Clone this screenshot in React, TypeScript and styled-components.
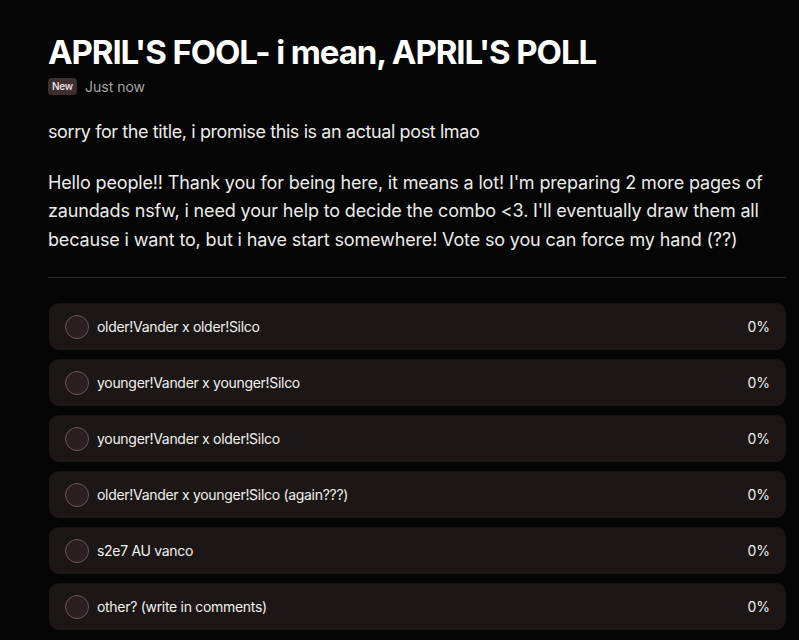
import styled, { createGlobalStyle } from "styled-components";

const Global = createGlobalStyle`
  body {
    margin: 0;
    background: #050505;
    color: #ecebea;
    font-family: Inter, "Noto Sans", sans-serif;
  }
`;

const Page = styled.main`
  padding: 30px 13px 0 48px;
  display: flex;
  flex-direction: column;
`;

const Title = styled.h1`
  margin: 0;
  font-size: 33px;
  line-height: 44px;
  font-weight: 700;
  letter-spacing: -1.1px;
  color: #ffffff;
`;

const Meta = styled.div`
  display: flex;
  align-items: center;
  gap: 8px;
  margin-top: 4px;
`;

const Badge = styled.span`
  background: #3d2f2f;
  color: #f3eeee;
  font-size: 10px;
  font-weight: 500;
  padding: 3px 4px;
  border-radius: 4px;
  line-height: 11px;
  letter-spacing: -0.2px;
`;

const Time = styled.span`
  font-size: 14px;
  color: #a9a6a4;
`;

const Text = styled.p`
  margin: 0;
  font-size: 18px;
  line-height: 28.5px;
  color: #ecebea;
  letter-spacing: -0.15px;
`;

const Lead = styled(Text)`
  margin-top: 23px;
  letter-spacing: -0.4px;
`;

const Body = styled(Text)`
  margin-top: 22px;
`;

const Divider = styled.hr`
  border: 0;
  border-top: 1px solid #2e2e2e;
  margin: 23px 0 25px;
`;

const Poll = styled.div`
  display: flex;
  flex-direction: column;
  gap: 9px;
  padding-left: 1px;
`;

const Option = styled.label`
  display: flex;
  align-items: center;
  height: 47px;
  padding: 0 16px;
  background: #1c1716;
  border-radius: 10px;
  font-size: 14px;
  letter-spacing: -0.3px;
  color: #f2f0ef;
`;

const Radio = styled.span`
  box-sizing: border-box;
  width: 24px;
  height: 24px;
  border-radius: 50%;
  border: 1px solid #6b5a57;
  background: #2a1f1e;
  flex-shrink: 0;
  margin-right: 8px;
`;

const Label = styled.span`
  flex: 1;
`;

const Percent = styled.span`
  font-size: 14px;
  letter-spacing: 0;
`;

const options = [
  "older!Vander x older!Silco",
  "younger!Vander x younger!Silco",
  "younger!Vander x older!Silco",
  "older!Vander x younger!Silco (again???)",
  "s2e7 AU vanco",
  "other? (write in comments)",
];

export default function App() {
  return (
    <>
      <Global />
      <Page>
        <Title>APRIL'S FOOL- i mean, APRIL'S POLL</Title>
        <Meta>
          <Badge>New</Badge>
          <Time>Just now</Time>
        </Meta>
        <Lead>sorry for the title, i promise this is an actual post lmao</Lead>
        <Body>
          Hello people!! Thank you for being here, it means a lot! I'm preparing 2 more pages of
          zaundads nsfw, i need your help to decide the combo &lt;3. I'll eventually draw them all
          because i want to, but i have start somewhere! Vote so you can force my hand (??)
        </Body>
        <Divider />
        <Poll>
          {options.map((o) => (
            <Option key={o}>
              <Radio />
              <Label>{o}</Label>
              <Percent>0%</Percent>
            </Option>
          ))}
        </Poll>
      </Page>
    </>
  );
}
